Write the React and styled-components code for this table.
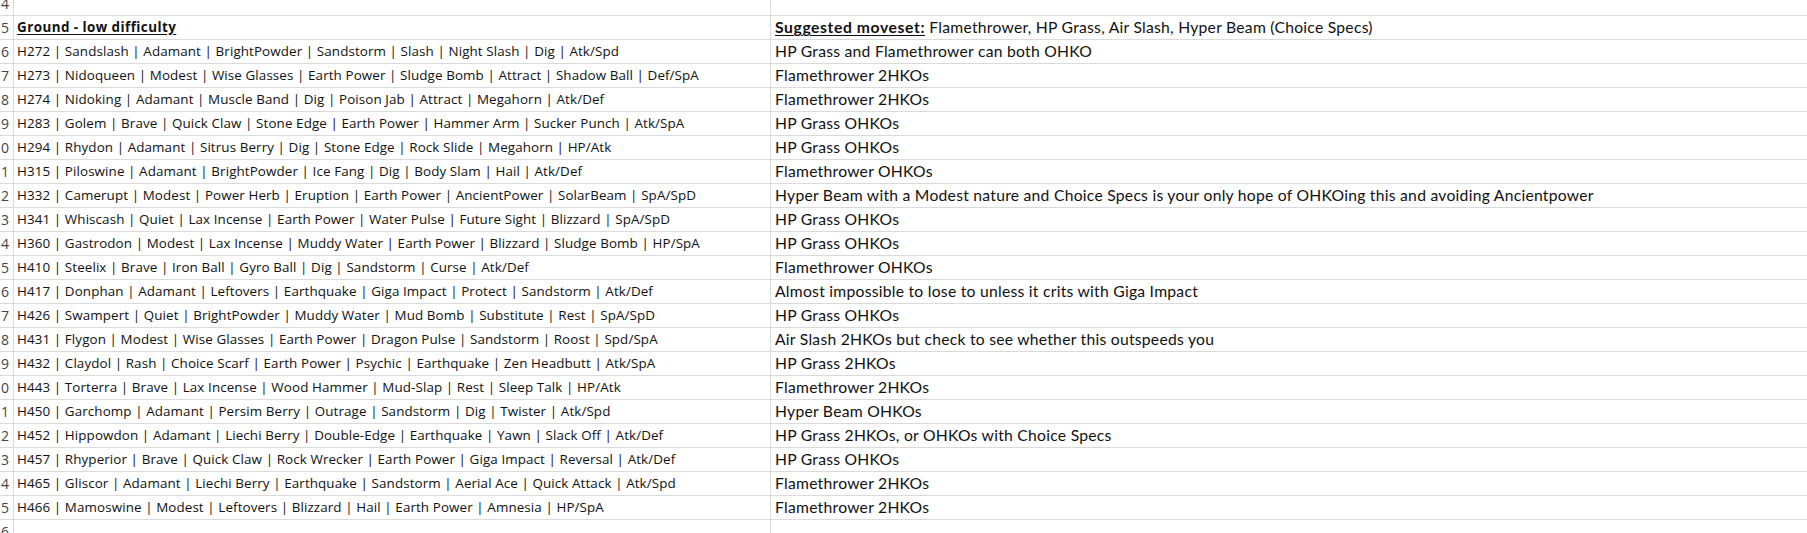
import React from "react";
import styled, { createGlobalStyle } from "styled-components";

const rows = [
  { n: 4, a: "", b: "" },
  { n: 5, head: true },
  { n: 6, a: "H272 | Sandslash | Adamant | BrightPowder | Sandstorm | Slash | Night Slash | Dig | Atk/Spd", b: "HP Grass and Flamethrower can both OHKO" },
  { n: 7, a: "H273 | Nidoqueen | Modest | Wise Glasses | Earth Power | Sludge Bomb | Attract | Shadow Ball | Def/SpA", b: "Flamethrower 2HKOs" },
  { n: 8, a: "H274 | Nidoking | Adamant | Muscle Band | Dig | Poison Jab | Attract | Megahorn | Atk/Def", b: "Flamethrower 2HKOs" },
  { n: 9, a: "H283 | Golem | Brave | Quick Claw | Stone Edge | Earth Power | Hammer Arm | Sucker Punch | Atk/SpA", b: "HP Grass OHKOs" },
  { n: 10, a: "H294 | Rhydon | Adamant | Sitrus Berry | Dig | Stone Edge | Rock Slide | Megahorn | HP/Atk", b: "HP Grass OHKOs" },
  { n: 11, a: "H315 | Piloswine | Adamant | BrightPowder | Ice Fang | Dig | Body Slam | Hail | Atk/Def", b: "Flamethrower OHKOs" },
  { n: 12, a: "H332 | Camerupt | Modest | Power Herb | Eruption | Earth Power | AncientPower | SolarBeam | SpA/SpD", b: "Hyper Beam with a Modest nature and Choice Specs is your only hope of OHKOing this and avoiding Ancientpower" },
  { n: 13, a: "H341 | Whiscash | Quiet | Lax Incense | Earth Power | Water Pulse | Future Sight | Blizzard | SpA/SpD", b: "HP Grass OHKOs" },
  { n: 14, a: "H360 | Gastrodon | Modest | Lax Incense | Muddy Water | Earth Power | Blizzard | Sludge Bomb | HP/SpA", b: "HP Grass OHKOs" },
  { n: 15, a: "H410 | Steelix | Brave | Iron Ball | Gyro Ball | Dig | Sandstorm | Curse | Atk/Def", b: "Flamethrower OHKOs" },
  { n: 16, a: "H417 | Donphan | Adamant | Leftovers | Earthquake | Giga Impact | Protect | Sandstorm | Atk/Def", b: "Almost impossible to lose to unless it crits with Giga Impact" },
  { n: 17, a: "H426 | Swampert | Quiet | BrightPowder | Muddy Water | Mud Bomb | Substitute | Rest | SpA/SpD", b: "HP Grass OHKOs" },
  { n: 18, a: "H431 | Flygon | Modest | Wise Glasses | Earth Power | Dragon Pulse | Sandstorm | Roost | Spd/SpA", b: "Air Slash 2HKOs but check to see whether this outspeeds you" },
  { n: 19, a: "H432 | Claydol | Rash | Choice Scarf | Earth Power | Psychic | Earthquake | Zen Headbutt | Atk/SpA", b: "HP Grass 2HKOs" },
  { n: 20, a: "H443 | Torterra | Brave | Lax Incense | Wood Hammer | Mud-Slap | Rest | Sleep Talk | HP/Atk", b: "Flamethrower 2HKOs" },
  { n: 21, a: "H450 | Garchomp | Adamant | Persim Berry | Outrage | Sandstorm | Dig | Twister | Atk/Spd", b: "Hyper Beam OHKOs" },
  { n: 22, a: "H452 | Hippowdon | Adamant | Liechi Berry | Double-Edge | Earthquake | Yawn | Slack Off | Atk/Def", b: "HP Grass 2HKOs, or OHKOs with Choice Specs" },
  { n: 23, a: "H457 | Rhyperior | Brave | Quick Claw | Rock Wrecker | Earth Power | Giga Impact | Reversal | Atk/Def", b: "HP Grass OHKOs" },
  { n: 24, a: "H465 | Gliscor | Adamant | Liechi Berry | Earthquake | Sandstorm | Aerial Ace | Quick Attack | Atk/Spd", b: "Flamethrower 2HKOs" },
  { n: 25, a: "H466 | Mamoswine | Modest | Leftovers | Blizzard | Hail | Earth Power | Amnesia | HP/SpA", b: "Flamethrower 2HKOs" },
  { n: 26, a: "", b: "" },
];

export default function App() {
  return (
    <>
      <GlobalStyle />
      <Viewport>
        <Sheet>
          {rows.map((row) => (
            <Row key={row.n}>
              {/* only the last digit fits in the narrow row header */}
              <RowHeader>
                <span>{row.n % 10}</span>
              </RowHeader>
              {row.head ? (
                <>
                  <CellA>
                    <Heading $spacing="0.45px">Ground - low difficulty</Heading>
                  </CellA>
                  <CellB>
                    <Heading $spacing="0.6px">Suggested moveset:</Heading>
                    &nbsp;Flamethrower, HP Grass, Air Slash, Hyper Beam (Choice Specs)
                  </CellB>
                </>
              ) : (
                <>
                  <CellA>{row.a}</CellA>
                  <CellB>{row.b}</CellB>
                </>
              )}
            </Row>
          ))}
        </Sheet>
      </Viewport>
    </>
  );
}

const GlobalStyle = createGlobalStyle`
  html, body {
    margin: 0;
    padding: 0;
    background: #ffffff;
  }
`;

const Viewport = styled.div`
  width: 1807px;
  height: 533px;
  overflow: hidden;
  background: #ffffff;
`;

// sheet is scrolled so that row 4 is half hidden
const Sheet = styled.div`
  margin-top: -8px;
  display: flex;
  flex-direction: column;
`;

const Row = styled.div`
  display: grid;
  grid-template-columns: 14px 757px 1fr;
  height: 24px;
  border-bottom: 1px solid #dadada;
  box-sizing: border-box;
`;

const RowHeader = styled.div`
  display: flex;
  justify-content: flex-end;
  overflow: hidden;
  border-right: 1px solid #dadada;
  padding-right: 4px;
  font-family: "Open Sans", "Noto Sans", sans-serif;
  font-size: 14px;
  line-height: 23px;
  color: #444444;
  white-space: nowrap;
`;

const CellA = styled.div`
  padding-left: 3px;
  border-right: 1px solid #dadada;
  font-family: "Open Sans", "Noto Sans", sans-serif;
  font-size: 13.4px;
  letter-spacing: 0.1px;
  line-height: 23px;
  color: #111111;
  white-space: nowrap;
  overflow: hidden;
`;

const CellB = styled.div`
  padding-left: 4px;
  font-family: Lato, "Noto Sans", sans-serif;
  font-size: 15.7px;
  letter-spacing: 0.25px;
  line-height: 23px;
  color: #111111;
  white-space: nowrap;
`;

const Heading = styled.span`
  font-weight: 700;
  letter-spacing: ${(p) => p.$spacing};
  text-decoration: underline;
  text-underline-offset: 2px;
`;
